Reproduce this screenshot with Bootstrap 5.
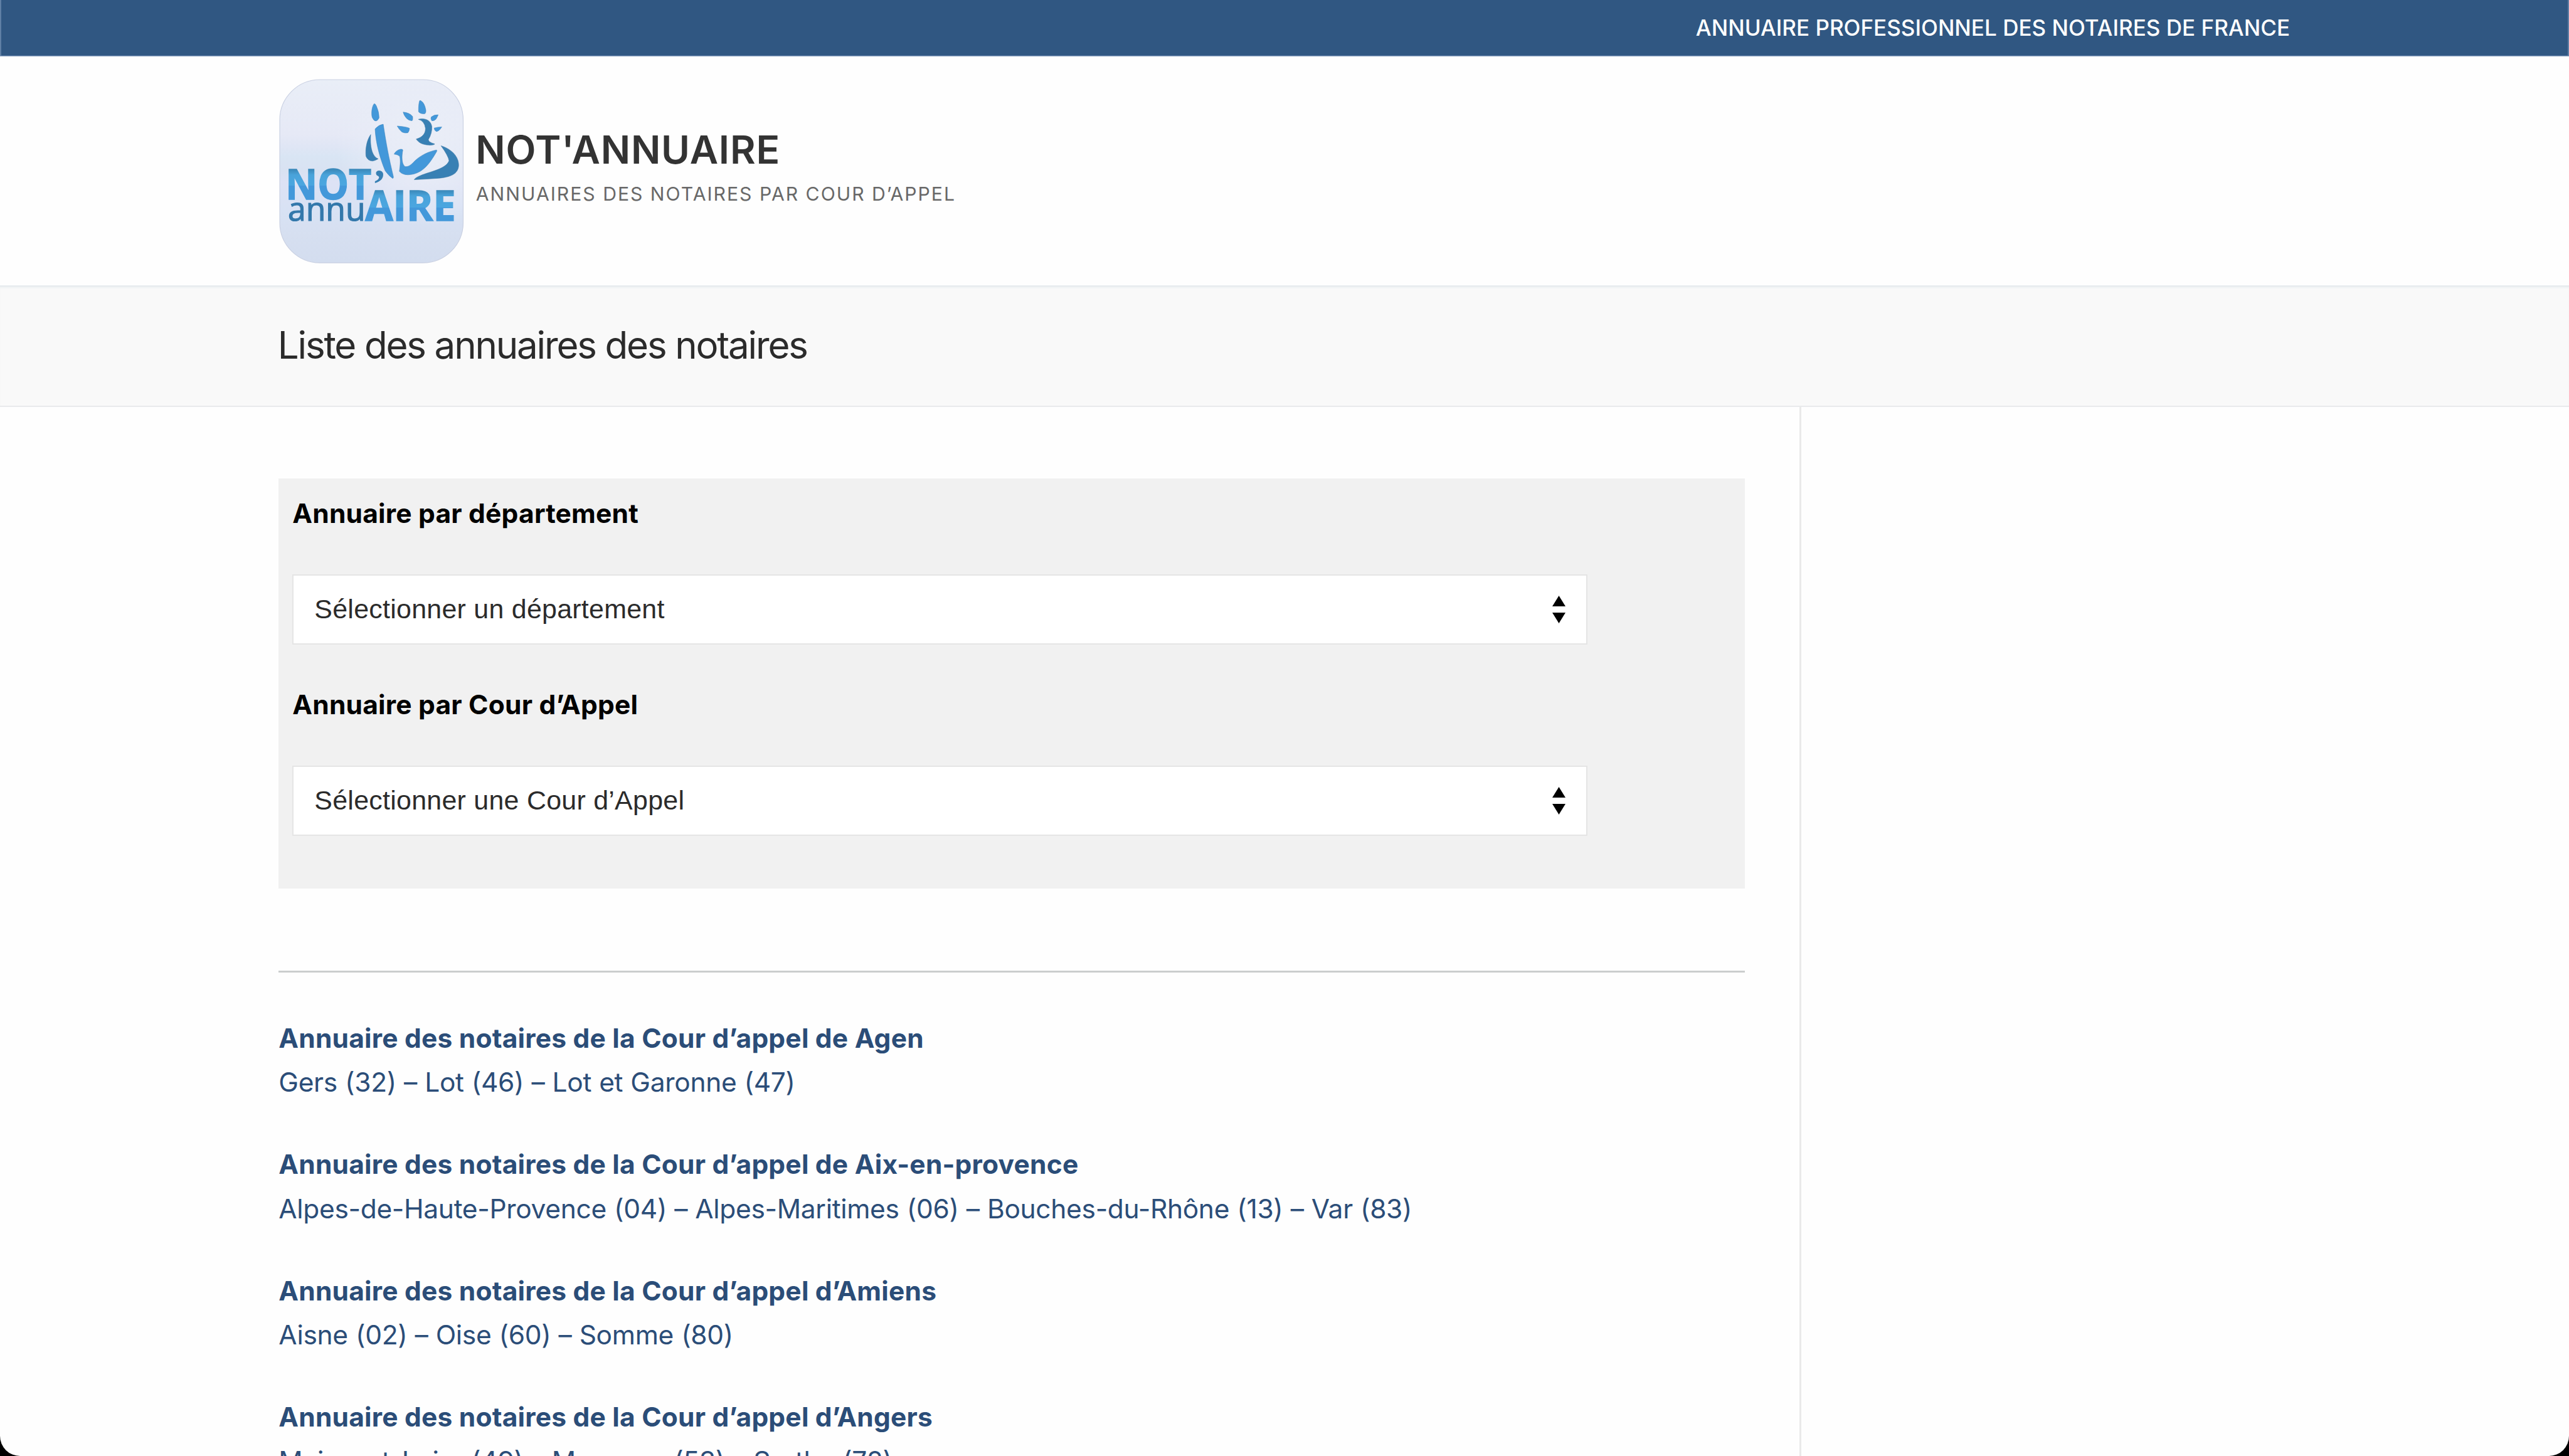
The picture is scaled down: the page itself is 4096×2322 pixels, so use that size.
<!DOCTYPE html>
<html lang="fr">
<head>
<meta charset="utf-8">
<meta name="viewport" content="width=device-width, initial-scale=1">
<title>Liste des annuaires des notaires</title>
<link href="https://cdn.jsdelivr.net/npm/bootstrap@5.3.0/dist/css/bootstrap.min.css" rel="stylesheet">
<style>
  html { background: #000; }
  body {
    width: 4096px; height: 2322px; overflow: hidden;
    font-family: Inter, "Liberation Sans", sans-serif;
    background: #fefefe; color: #2b2b2b;
    border-radius: 0 0 32px 32px;
  }
  .wrap { margin-left: 444.3px; margin-right: 445px; }
  .top-strip {
    height: 89.5px; background: #305782; color: #fff;
    border-bottom: 1px solid #8ba2c0;
    box-shadow: inset 3px 0 0 -1px #5f7fa5, inset -3px 0 0 -1px #5f7fa5, inset 0 -1px 0 #4a6c96;
  }
  .top-strip p { font-size: 35px; font-weight: 500; line-height: 40px; letter-spacing: .016px; }
  .site-head { height: 365.5px; background: #fefefe; }
  .site-logo { width: 296.5px; height: 296.5px; margin-top: 35px; margin-left: -.5px; }
  .site-titles { margin-left: 18px; padding-top: 109px; }
  .site-name { font-size: 62.4px; font-weight: 600; line-height: 80px; letter-spacing: .82px; color: #333; }
  .site-tagline { font-size: 30.2px; line-height: 50px; letter-spacing: 1.98px; color: #686868; margin: 5px 0 0 .5px; }
  .title-band {
    height: 194px; background: #f9f9f9; border-bottom: 2.6px solid #e9eaec;
    box-shadow: inset 0 3px 0 #e9edf0, inset 0 5px 2px #f3f5f6;
    padding-top: 64.5px;
  }
  .title-band h1 { font-size: 60px; font-weight: 400; line-height: 60px; letter-spacing: -2.15px; margin-left: -1.5px; color: #2b2b2b; }
  .content-col { width: 2427.7px; padding-top: 114px; border-right: 3px solid #eaeaea; height: 1680px; }
  .content-in { width: 2337.5px; }
  .filter-box { height: 654px; background: #f1f1f1; padding: 21px 0 0 22px; }
  .line { font-size: 42.5px; line-height: 70.4px; }
  .line-strong { font-weight: 700; letter-spacing: .2px; }
  .filter-label { color: #000; }
  .picker {
    width: 2065px; height: 112px; background: #fff; border: 2.6px solid #e5e5e5;
    padding: 0 33px 0 33px; margin: 62px 0 60.5px;
    font-family: "Liberation Sans", Arial, sans-serif; font-size: 42.9px; letter-spacing: .28px; line-height: 107px;
  }
  .picker span { padding-bottom: 1px; }
  .picker svg { width: 21px; height: 44px; }
  .rule { height: 3px; background: #cbcdcd; margin: 131.2px 0 69.8px; }
  .court { margin-bottom: 60.5px; color: #2b4d78; }
  .court a { color: inherit; }
  .court .depts { letter-spacing: -.33px; word-spacing: .55px; }
</style>
<script src="https://cdn.jsdelivr.net/npm/bootstrap@5.3.0/dist/js/bootstrap.bundle.min.js"></script>
</head>
<body>
<div class="top-strip">
  <div class="wrap h-100 d-flex align-items-center justify-content-end"><p class="mb-0">ANNUAIRE PROFESSIONNEL DES NOTAIRES DE FRANCE</p></div>
</div>

<header class="site-head">
  <div class="wrap d-flex align-items-start">
    <svg class="site-logo flex-shrink-0" viewBox="66 70 1026 1026" role="img" aria-label="Not'annuaire">
      <defs>
        <linearGradient id="bg" x1="0" y1="0" x2="0" y2="1">
          <stop offset="0" stop-color="#e9eef7"/><stop offset=".3" stop-color="#e6e9f6"/>
          <stop offset=".36" stop-color="#e0e6f5"/><stop offset=".42" stop-color="#d9e5f4"/>
          <stop offset=".5" stop-color="#d9e2f2"/><stop offset=".56" stop-color="#dde2f5"/>
          <stop offset=".72" stop-color="#d8e2f4"/><stop offset=".85" stop-color="#d6dff0"/><stop offset="1" stop-color="#d3ddef"/>
        </linearGradient>
        <radialGradient id="lit" cx=".8" cy=".3" r=".5">
          <stop offset="0" stop-color="#eaeef7"/><stop offset=".5" stop-color="#e8ecf7" stop-opacity=".8"/><stop offset="1" stop-color="#e8ecf7" stop-opacity="0"/>
        </radialGradient>
        <linearGradient id="t1" gradientUnits="userSpaceOnUse" x1="0" y1="574" x2="0" y2="744">
          <stop offset="0" stop-color="#3c8abb"/><stop offset=".17" stop-color="#49a3da"/><stop offset=".52" stop-color="#4ba6e0"/>
          <stop offset=".52" stop-color="#4398da"/><stop offset="1" stop-color="#4398da"/>
        </linearGradient>
        <linearGradient id="t2" gradientUnits="userSpaceOnUse" x1="0" y1="690" x2="0" y2="860">
          <stop offset="0" stop-color="#3c8abb"/><stop offset=".17" stop-color="#49a3da"/><stop offset=".54" stop-color="#4ba6e0"/>
          <stop offset=".54" stop-color="#4398da"/><stop offset="1" stop-color="#4398da"/>
        </linearGradient>
      </defs>
      <rect x="73" y="77" width="1012" height="1011" rx="222" fill="url(#bg)"/>
      <rect x="73" y="77" width="1012" height="1011" rx="222" fill="url(#lit)" stroke="#c9d0e2" stroke-width="4"/>
      <g fill="#4398da" stroke="#3d85bd" stroke-width="2">
        <path d="M594 210C582 222 577 262 583 285Q592 305 603 305Q613 305 621 288Q621 255 606 222Q600 208 594 210Z"/>
        <path d="M644 323Q620 326 599 349C602 420 625 510 655 580Q675 608 696 622Q701 622 700 612C675 510 660 430 644 323Z"/>
        <path d="M845 193Q838 210 839 254Q850 267 873 265Q880 262 879 245Q872 205 852 194Q848 191 845 193Z"/>
        <path d="M754 256Q757 272 772 290Q785 303 803 304Q808 300 806 280Q790 260 754 256Z"/>
        <path d="M721 333Q730 350 747 366Q765 374 780 370Q788 360 789 346Q780 338 721 333Z"/>
        <path d="M947 271Q925 270 909 283Q904 292 912 304Q925 306 935 295Q942 285 947 271Z"/>
        <path d="M967 338Q945 338 925 344Q926 358 937 363Q952 362 967 338Z"/>
        <path d="M704 488Q715 466 740 461Q752 460 752 466C745 500 745 545 765 557Q785 560 808 536C840 500 890 474 938 465Q942 468 938 475C900 540 860 600 780 602Q750 602 733 583C738 550 740 520 735 500Q725 490 704 488Z"/>
      </g>
      <g fill="#3880b4" stroke="#3474a3" stroke-width="2">
        <path d="M575 380C550 415 545 470 549 500Q560 526 585 526Q600 524 616 514C580 500 570 440 575 380Z"/>
        <path d="M838 296C865 288 905 295 912 335Q914 375 893 407Q893 422 928 432Q925 439 895 438C860 436 840 425 826 405C860 395 878 375 877 345Q872 305 838 296Z"/>
        <path d="M963 442C1005 455 1060 490 1060 550C1058 600 1010 615 950 621Q880 626 815 629Q820 618 850 606C900 585 990 570 1007 525Q1005 500 963 442Z"/>
      </g>
      <g font-family="Open Sans" font-weight="700" stroke-width="5">
        <text x="105" y="739" font-size="227" textLength="474" lengthAdjust="spacingAndGlyphs" fill="url(#t1)" stroke="url(#t1)">NOT</text>
        <text x="544" y="855" font-size="227" textLength="500" lengthAdjust="spacingAndGlyphs" fill="url(#t2)" stroke="url(#t2)">AIRE</text>
      </g>
      <text x="584" y="728" font-family="Liberation Serif" font-weight="700" font-size="228" fill="#3880b4">’</text>
      <text x="118" y="856" font-family="Open Sans" font-size="178" textLength="428" lengthAdjust="spacingAndGlyphs" fill="#3378ab" stroke="#3378ab" stroke-width="4">annu</text>
    </svg>
    <div class="site-titles">
      <div class="site-name">NOT'ANNUAIRE</div>
      <div class="site-tagline">ANNUAIRES DES NOTAIRES PAR COUR D’APPEL</div>
    </div>
  </div>
</header>

<div class="title-band"><div class="wrap"><h1 class="mb-0">Liste des annuaires des notaires</h1></div></div>

<main class="wrap">
  <div class="content-col">
    <div class="content-in">
      <div class="filter-box">
        <div class="line line-strong filter-label">Annuaire par département</div>
        <div class="picker d-flex align-items-center justify-content-between"><span>Sélectionner un département</span>
          <svg viewBox="0 0 21 44"><path d="M10.5 0L21 17H0ZM10.5 44L21 27H0Z"/></svg></div>
        <div class="line line-strong filter-label">Annuaire par Cour d’Appel</div>
        <div class="picker d-flex align-items-center justify-content-between"><span>Sélectionner une Cour d’Appel</span>
          <svg viewBox="0 0 21 44"><path d="M10.5 0L21 17H0ZM10.5 44L21 27H0Z"/></svg></div>
      </div>
      <div class="rule"></div>
      <div class="court line">
        <a class="line-strong d-block text-decoration-none" href="#">Annuaire des notaires de la Cour d’appel de Agen</a>
        <div class="depts">Gers (32) – Lot (46) – Lot et Garonne (47)</div>
      </div>
      <div class="court line">
        <a class="line-strong d-block text-decoration-none" href="#">Annuaire des notaires de la Cour d’appel de Aix-en-provence</a>
        <div class="depts">Alpes-de-Haute-Provence (04) – Alpes-Maritimes (06) – Bouches-du-Rhône (13) – Var (83)</div>
      </div>
      <div class="court line">
        <a class="line-strong d-block text-decoration-none" href="#">Annuaire des notaires de la Cour d’appel d’Amiens</a>
        <div class="depts">Aisne (02) – Oise (60) – Somme (80)</div>
      </div>
      <div class="court line">
        <a class="line-strong d-block text-decoration-none" href="#">Annuaire des notaires de la Cour d’appel d’Angers</a>
        <div class="depts">Maine-et-Loire (49) – Mayenne (53) – Sarthe (72)</div>
      </div>
    </div>
  </div>
</main>
</body>
</html>
